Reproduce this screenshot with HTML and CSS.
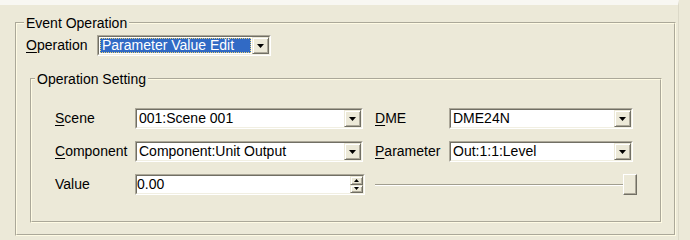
FILE: index.html
```html
<!DOCTYPE html>
<html>
<head>
<meta charset="utf-8">
<link rel="stylesheet" href="styles.css">
</head>
<body>
<div class="screen">
  <fieldset class="group outer">
    <legend>Event Operation</legend>
    <div class="op-row">
      <span class="label"><u>O</u>peration</span>
      <div class="combo combo-op">
        <div class="combo-field field-op">
          <span class="selected">Parameter Value Edit</span>
          <span class="drop-btn"><svg width="7" height="4" viewBox="0 0 7 4"><path d="M0 0h7L3.5 4z" fill="#000"/></svg></span>
        </div>
      </div>
    </div>
    <fieldset class="group inner">
      <legend>Operation Setting</legend>
      <div class="grid">
        <span class="label"><u>S</u>cene</span>
        <div class="combo">
          <div class="combo-field">
            <span class="combo-text">001:Scene 001</span>
            <span class="drop-btn"><svg width="7" height="4" viewBox="0 0 7 4"><path d="M0 0h7L3.5 4z" fill="#000"/></svg></span>
          </div>
        </div>
        <span class="label"><u>D</u>ME</span>
        <div class="combo">
          <div class="combo-field">
            <span class="combo-text">DME24N</span>
            <span class="drop-btn"><svg width="7" height="4" viewBox="0 0 7 4"><path d="M0 0h7L3.5 4z" fill="#000"/></svg></span>
          </div>
        </div>

        <span class="label"><u>C</u>omponent</span>
        <div class="combo">
          <div class="combo-field">
            <span class="combo-text">Component:Unit Output</span>
            <span class="drop-btn"><svg width="7" height="4" viewBox="0 0 7 4"><path d="M0 0h7L3.5 4z" fill="#000"/></svg></span>
          </div>
        </div>
        <span class="label"><u>P</u>arameter</span>
        <div class="combo">
          <div class="combo-field">
            <span class="combo-text">Out:1:1:Level</span>
            <span class="drop-btn"><svg width="7" height="4" viewBox="0 0 7 4"><path d="M0 0h7L3.5 4z" fill="#000"/></svg></span>
          </div>
        </div>

        <span class="label">Value</span>
        <div class="combo spin-edit">
          <div class="combo-field spin-field">
            <span class="combo-text value-text">0.00</span>
            <span class="spin-btns">
              <span class="spin-btn"><svg width="5" height="3" viewBox="0 0 5 3"><path d="M0 3h5L2.5 0z" fill="#000"/></svg></span>
              <span class="spin-btn"><svg width="5" height="3" viewBox="0 0 5 3"><path d="M0 0h5L2.5 3z" fill="#000"/></svg></span>
            </span>
          </div>
        </div>
        <div class="slider">
          <div class="track"></div>
          <div class="thumb"></div>
        </div>
      </div>
    </fieldset>
  </fieldset>
</div>
</body>
</html>
```
FILE: styles.css
```css
* { box-sizing: border-box; }
html, body { margin: 0; padding: 0; }
body {
  width: 690px;
  height: 240px;
  background: #ECE9D8;
  font-family: "Liberation Sans", Arial, sans-serif;
  font-size: 14px;
  color: #000;
  overflow: hidden;
}
.screen {
  width: 679px;
  height: 240px;
  border-top: 5px solid #F8F7F2;
  border-right: 1px solid #DCD9C8;
  padding-top: 10px;
}
.group {
  border: 2px groove #FFFBE4;
  margin: 0;
  min-width: 0;
}
.group > legend {
  padding: 0 2px;
  line-height: 16px;
}
.outer {
  margin-left: 15px;
  width: 661px;
  padding: 4px 12px 11px 9px;
}
.outer > legend { margin-left: -2px; }
.op-row {
  display: flex;
  align-items: center;
  height: 21px;
}
.op-row .label { width: 71px; }
.label { line-height: 21px; white-space: nowrap; }
.label u { text-decoration-thickness: 1px; text-underline-offset: 2px; }

.inner {
  margin: 15px 0 0 4px;
  padding: 21px 0 26px 23px;
}
.inner > legend { margin-left: -20px; }

.grid {
  display: grid;
  grid-template-columns: 68px 228px 62px 184px;
  grid-auto-rows: 21px;
  column-gap: 12px;
  row-gap: 12px;
  align-items: center;
}

.combo {
  display: flex;
  height: 21px;
  border: 1px solid;
  border-color: #ACA899 #FFFFFF #FFFFFF #ACA899;
}
.combo-op { width: 174px; }
.combo-field {
  flex: 1;
  display: flex;
  align-items: stretch;
  min-width: 0;
  background: #fff;
  border: 1px solid;
  border-color: #716F64 #F1EFE2 #F1EFE2 #716F64;
}
.combo-text {
  flex: 1;
  padding-left: 2px;
  line-height: 17px;
  white-space: nowrap;
  overflow: hidden;
}
.field-op { padding: 1px 0 1px 1px; }
.selected {
  flex: 1;
  background: #316AC5;
  color: #fff;
  line-height: 15px;
  padding-left: 2px;
  outline: 1px dotted #E8D47A;
  outline-offset: -1px;
  white-space: nowrap;
  margin-right: 1px;
}
.field-op .drop-btn { margin: -1px 0; }
.drop-btn {
  flex: none;
  width: 17px;
  display: flex;
  align-items: center;
  justify-content: center;
  background: #ECE9D8;
  border: 1px solid;
  border-color: #ECE9D8 #716F64 #716F64 #ECE9D8;
  box-shadow: inset 1px 1px #fff, inset -1px -1px #ACA899;
}

.spin-edit { width: 230px; }
.value-text { padding-left: 0; }
.spin-btns {
  flex: none;
  width: 13px;
  display: flex;
  flex-direction: column;
}
.spin-btn {
  flex: 1;
  display: flex;
  align-items: center;
  justify-content: center;
  background: #ECE9D8;
  border: 1px solid;
  border-color: #ECE9D8 #716F64 #716F64 #ECE9D8;
  box-shadow: inset 1px 1px #fff, inset -1px -1px #ACA899;
}

.slider {
  grid-column: 3 / 5;
  width: 262px;
  height: 21px;
  position: relative;
  display: flex;
  align-items: center;
}
.track {
  flex: 1;
  margin-right: 6px;
  height: 2px;
  border-top: 1px solid #A19E8F;
  border-bottom: 1px solid #fff;
}
.thumb {
  position: absolute;
  left: 248px;
  top: 0;
  width: 14px;
  height: 21px;
  background: #ECE9D8;
  border: 1px solid;
  border-color: #fff #716F64 #716F64 #fff;
  box-shadow: inset -1px -1px #ACA899;
}
```
